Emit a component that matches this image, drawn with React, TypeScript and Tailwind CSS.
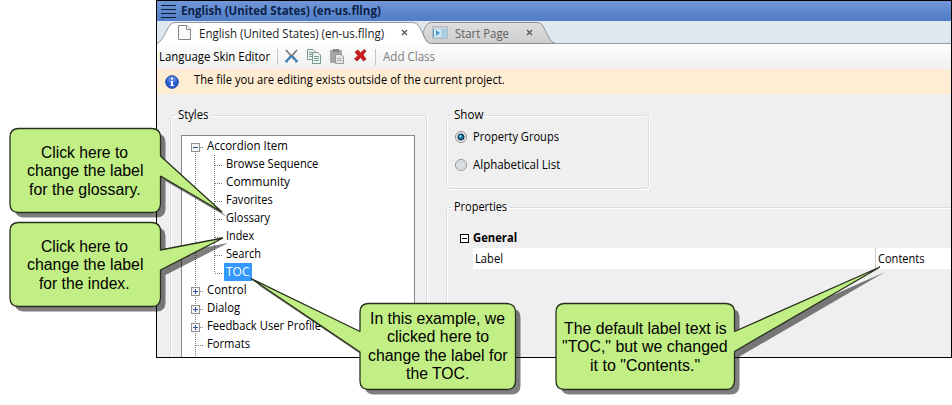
import { useLayoutEffect, useRef, useState, type ReactNode } from "react";

/* Single-line label condensed or stretched to a given width. */
function Fit({ w, className = "", children }: { w: number; className?: string; children: ReactNode }) {
  const ref = useRef<HTMLSpanElement>(null);
  const [scale, setScale] = useState(1);
  useLayoutEffect(() => {
    if (ref.current) setScale(w / ref.current.offsetWidth);
  }, [w]);
  return (
    <span className="inline-block shrink-0 whitespace-nowrap" style={{ width: w }}>
      <span ref={ref} className={`inline-block origin-left ${className}`} style={{ transform: `scaleX(${scale})` }}>
        {children}
      </span>
    </span>
  );
}

function TitleBar() {
  return (
    <div className="flex h-5 shrink-0 items-center bg-linear-to-b from-[#7197d8] to-[#4e7cc6] pl-1">
      <svg width="16" height="18" className="mr-1 shrink-0" shapeRendering="crispEdges">
        {[3, 7, 11, 15].map((y) => (
          <rect key={y} x="0" y={y} width="15" height="1" fill="#101c33" />
        ))}
      </svg>
      <Fit w={200} className="font-bold leading-5 text-[#0d2247]">English (United States) (en-us.fllng)</Fit>
    </div>
  );
}

function TabStrip() {
  return (
    <div className="relative h-[23px] shrink-0 bg-[#dfe7f1]">
      <svg width="794" height="23" className="absolute inset-0">
        <defs>
          <linearGradient id="tab" x1="0" y1="0" x2="0" y2="1">
            <stop offset="0" stopColor="#dedede" />
            <stop offset="1" stopColor="#cecece" />
          </linearGradient>
        </defs>
        <path d="M0 22.5H794" stroke="#9a9a9a" />
        <path d="M273 22.5C268 20 267 14 266 11.500C268 6 270 1.500 275 1.500H379C387 1.500 386 7 391 15Q395 22.500 399 22.500Z" fill="url(#tab)" stroke="#8f8f8f" />
        <path d="M0 23Q4 21 9 11Q13 1.500 18 1.500H254C261 1.500 262 5 265 11C268 18 269 22 274 23Z" fill="#fff" />
        <path d="M0 22.500Q4 21 9 11Q13 1.500 18 1.500H254C261 1.500 262 5 265 11C268 18 269 21 273 22.500" fill="none" stroke="#979797" />
      </svg>
      <div className="relative flex h-[23px] items-center">
        <svg width="14" height="16" className="ml-[21px] shrink-0">
          <path d="M.5.500H9L12.500 4V14.500H.5Z" fill="#fbfbfb" stroke="#858585" />
          <path d="M8.500.500V4.500H12.500" fill="#fff" stroke="#858585" />
        </svg>
        <span className="relative top-px"><Fit w={185} className="ml-[7px] text-[#1c1c1c]">English (United States) (en-us.fllng)</Fit></span>
        <svg width="7" height="7" className="ml-[24px] shrink-0"><path d="M1 1L6 6M6 1L1 6" stroke="#555" strokeWidth="1.200" /></svg>
        <svg width="16" height="13" className="ml-[24px] shrink-0">
          <rect x=".5" y=".5" width="15" height="12" fill="#a9cfe5" stroke="#b5bcc1" />
          <rect x="1" y="1" width="14" height="2" fill="#c8ced2" />
          <rect x="1" y="3" width="8" height="8" fill="#d5eaf5" />
          <path d="M1.500 3V11" stroke="#4f9cc5" />
          <path d="M4 4L8 7L4 10Z" fill="#499bc9" />
        </svg>
        <span className="relative top-px"><Fit w={54} className="ml-[7px] text-[#606060]">Start Page</Fit></span>
        <svg width="7" height="7" className="ml-[24px] shrink-0"><path d="M1 1L6 6M6 1L1 6" stroke="#555" strokeWidth="1.200" /></svg>
      </div>
    </div>
  );
}

function Toolbar() {
  return (
    <div className="flex h-[25px] shrink-0 items-center bg-linear-to-b from-[#fdfdfd] to-[#f0f0f0] pl-[2px]">
      <Fit w={111}>Language Skin Editor</Fit>
      <div className="ml-[7px] h-4 w-px bg-[#c5c5c5]" />
      <svg width="15" height="15" className="ml-[6px] shrink-0" fill="none">
        <path d="M2 1L11 11M13 1L4 11" stroke="#777" strokeWidth="1.700" />
        <path d="M8 7L12.500 12M7 7L2.500 12" stroke="#367cb5" strokeWidth="2" />
        <path d="M1 11.500L3.500 13.500M14 11.500L11.500 13.500" stroke="#3a7dba" strokeWidth="1.500" />
      </svg>
      <svg width="15" height="15" className="ml-[8px] shrink-0" stroke="#7c9691" fill="#edf4f2">
        <path d="M.5.500H6L8.500 3V10.500H.5Z" />
        <path d="M2 3.500H5M2 5.500H5M2 7.500H5" />
        <path d="M5.500 3.500H11L13.500 6V14.500H5.500Z" />
        <path d="M7 7.500H12M7 9.500H12M7 11.500H12" stroke="#72a096" />
      </svg>
      <svg width="15" height="15" className="ml-[8px] shrink-0">
        <rect x="0" y="1" width="12" height="13" rx="1" fill="#a6a6a6" />
        <rect x="3" y="0" width="6" height="3" fill="#858585" />
        <path d="M5.500 5.500H11L13.500 8V14.500H5.500Z" fill="#e7e7e7" stroke="#999" />
        <path d="M7 9.500H11M7 11.500H12" stroke="#aaa" />
      </svg>
      <svg width="13" height="13" className="mb-[2px] ml-[9px] shrink-0">
        <path d="M1 3L4 1L6.500 4L10 .5L12 2L9 6L12 10L9.500 12L6.500 8.500L3 12L.5 10L4 6.500Z" fill="#cf1e1e" stroke="#9d1515" strokeWidth=".8" />
      </svg>
      <div className="ml-[8px] h-4 w-px bg-[#c5c5c5]" />
      <Fit w={52} className="ml-[7px] text-[#7c7c7c]">Add Class</Fit>
    </div>
  );
}

function InfoBar() {
  return (
    <div className="flex h-[25px] shrink-0 items-center bg-[#ffedd3] pl-2">
      <svg width="14" height="14" className="mr-[15px] shrink-0">
        <circle cx="7" cy="7" r="6.300" fill="#2c5fd0" stroke="#1d46a6" />
        <ellipse cx="7" cy="4.500" rx="4.500" ry="3" fill="#6f98ec" opacity=".6" />
        <path d="M6 2.500H8V4.500H6ZM5.500 6H8V10H9V11H5.500V10H6V7H5.500Z" fill="#fff" />
      </svg>
      <Fit w={311} className="relative -top-[2px]">The file you are editing exists outside of the current project.</Fit>
    </div>
  );
}

type Row = { text: string; w: number; kind: "minus" | "plus" | "leaf" | "child"; selected?: boolean };
const rows: Row[] = [
  { text: "Accordion Item", w: 81, kind: "minus" },
  { text: "Browse Sequence", w: 92, kind: "child" },
  { text: "Community", w: 64, kind: "child" },
  { text: "Favorites", w: 47, kind: "child" },
  { text: "Glossary", w: 44, kind: "child" },
  { text: "Index", w: 28, kind: "child" },
  { text: "Search", w: 35, kind: "child" },
  { text: "TOC", w: 24, kind: "child", selected: true },
  { text: "Control", w: 40, kind: "plus" },
  { text: "Dialog", w: 33, kind: "plus" },
  { text: "Feedback User Profile I", w: 120, kind: "plus" },
  { text: "Formats", w: 43, kind: "leaf" },
];

function TreeRow({ row, index }: { row: Row; index: number }) {
  const child = row.kind === "child";
  const last = !!row.selected;
  const boxed = row.kind === "minus" || row.kind === "plus";
  return (
    <div className="flex h-[18px] shrink-0 items-center">
      <svg width={child ? 41 : 24} height="18" className="shrink-0" shapeRendering="crispEdges">
        <g stroke="#777" strokeDasharray="1 1" fill="none">
          <path d={index === 0 ? "M13.500 10V18" : "M13.500 0V18"} />
          {child ? (
            <>
              <path d={last ? "M32.500 0V10" : "M32.500 0V18"} />
              <path d="M33 10.500H41" />
            </>
          ) : (
            <path d="M14 10.500H22" />
          )}
        </g>
        {boxed && (
          <>
            <rect x="9.500" y="6.500" width="8" height="8" fill="#f5f5f5" stroke="#919191" />
            <path d={row.kind === "plus" ? "M11 10.500H16M13.500 8V13" : "M11 10.500H16"} stroke="#34519b" />
          </>
        )}
      </svg>
      {row.selected ? (
        <span className="ml-px flex h-[18px] w-7 items-center bg-[#3399ff] pl-[2px] text-white">
          <Fit w={row.w}>{row.text}</Fit>
        </span>
      ) : (
        <Fit w={row.w} className={child ? "ml-[3px]" : "ml-px"}>{row.text}</Fit>
      )}
    </div>
  );
}

function StylesPanel() {
  return (
    <fieldset className="ml-[13px] mt-[12px] h-[252px] w-[257px] shrink-0 rounded-t-[3px] border border-b-0 border-[#d3dee7] shadow-[inset_1px_1px_0_#fff,1px_0_0_#fff]">
      <legend className="ml-1 h-[18px] px-[3px] leading-[18px]"><Fit w={30}>Styles</Fit></legend>
      <div className="ml-[10px] mt-[11px] flex h-[232px] w-[234px] flex-col border border-[#828790] bg-white pt-px">
        {rows.map((row, i) => <TreeRow key={row.text} row={row} index={i} />)}
        <svg width="24" height="6" className="shrink-0" shapeRendering="crispEdges">
          <path d="M13.500 0V6" stroke="#777" strokeDasharray="1 1" />
        </svg>
      </div>
    </fieldset>
  );
}

function Radio({ label, w, on }: { label: string; w: number; on?: boolean }) {
  return (
    <div className="flex h-7 items-center">
      <svg width="12" height="12" className="mr-[6px] shrink-0">
        <circle cx="6" cy="6" r="5.500" fill="#f3f3f3" stroke="#8d8f8f" />
        <circle cx="6" cy="6" r="3.800" fill={on ? "#bcd3df" : "#dcdfe2"} stroke="#c4c8cb" strokeWidth=".7" />
        {on && <circle cx="6" cy="6" r="3" fill="#1b6c98" stroke="#0d3650" />}
        {on && <circle cx="5.300" cy="5.300" r="1.300" fill="#72d0f2" />}
      </svg>
      <Fit w={w}>{label}</Fit>
    </div>
  );
}

function PropertiesColumn() {
  return (
    <div className="ml-[19px] mt-[12px] flex w-[505px] shrink-0 flex-col">
      <fieldset className="h-[83px] w-[203px] rounded-[3px] border border-[#d3dee7] pl-2 shadow-[inset_1px_1px_0_#fff,1px_1px_0_#fff]">
        <legend className="-ml-[4px] h-[18px] px-[3px] leading-[18px]"><Fit w={29}>Show</Fit></legend>
        <div className="-mt-px"><Radio label="Property Groups" w={86} on /></div>
        <Radio label="Alphabetical List" w={87} />
      </fieldset>
      <fieldset className="mt-[9px] h-[162px] w-[520px] rounded-tl-[3px] border border-b-0 border-[#d3dee7] shadow-[inset_1px_1px_0_#fff]">
        <legend className="ml-[4px] h-[18px] px-[3px] leading-[18px]"><Fit w={53}>Properties</Fit></legend>
        <div className="ml-[13px] mt-[12px] flex h-[20px] items-center">
          <svg width="9" height="9" className="mr-1 shrink-0" shapeRendering="crispEdges">
            <rect x=".5" y=".5" width="8" height="8" fill="#fff" stroke="#000" />
            <path d="M2 4.500H7" stroke="#000" />
          </svg>
          <Fit w={44} className="font-bold">General</Fit>
        </div>
        <div className="ml-[26px] flex h-[21px] bg-white">
          <div className="flex w-[403px] items-center border-r border-[#cdcdcd] pl-[2px]"><Fit w={28}>Label</Fit></div>
          <div className="flex items-center pl-[2px]"><Fit w={47}>Contents</Fit></div>
        </div>
      </fieldset>
    </div>
  );
}

const bubbles = [
  "M18 128.500H152Q160.500 129 160.500 137V156L222 212L160.500 176V204Q160 212.500 152 212.500H18Q10 212 10 204V137Q10 129 18 128.500Z",
  "M18 222.500H152Q160.500 223 160.500 231V250L223 238L160.500 270V298Q160 306.500 152 306.500H18Q10 306 10 298V231Q10 223 18 222.500Z",
  "M368 303.500H507Q515.500 304 515.500 312V381Q515 389.500 507 389.500H368Q360 389 360 381V352L251 278.500L360 331.500V312Q360 304 368 303.500Z",
  "M564 303.500H726Q734.500 304 734.500 312V331.500L880 267L734.500 351.500V381Q734 389.500 726 389.500H564Q556 389 556 381V312Q556 304 564 303.500Z",
];

type Note = { box: string; lines: [string, number][] };
const notes: Note[] = [
  { box: "left-[10px] top-[144px] w-[149px]", lines: [["Click here to", 87], ["change the label", 116], ["for the glossary.", 112]] },
  { box: "left-[10px] top-[238px] w-[149px]", lines: [["Click here to", 87], ["change the label", 116], ["for the index.", 91]] },
  { box: "left-[360px] top-[310px] w-[155px]", lines: [["In this example, we", 135], ["clicked here to", 102], ["change the label for", 140], ["the TOC.", 63]] },
  { box: "left-[556px] top-[320px] w-[178px]", lines: [["The default label text is", 163], ['"TOC," but we changed', 166], ['it to "Contents."', 110]] },
];

function Callouts() {
  return (
    <div className="pointer-events-none absolute inset-0">
      <svg width="952" height="405" className="absolute inset-0">
        {bubbles.map((d) => (
          <g key={d}>
            <path d={d} transform="translate(5 5)" fill="#000" fillOpacity=".5" />
            <path d={d} fill="#c2ef85" stroke="#27301c" strokeWidth="1.300" strokeLinejoin="bevel" />
          </g>
        ))}
      </svg>
      {notes.map((note) => (
        <div
          key={note.box}
          className={`absolute flex flex-col items-center font-['Liberation_Sans',Arial,sans-serif] text-[16px] leading-[18.4px] text-black ${note.box}`}
        >
          {note.lines.map(([text, w]) => <Fit key={text} w={w}>{text}</Fit>)}
        </div>
      ))}
    </div>
  );
}

export default function App() {
  return (
    <div className="relative h-[405px] w-[952px] overflow-hidden bg-white font-['Open_Sans','Noto_Sans',sans-serif] text-[12px] leading-[18px] text-black">
      <div className="ml-[156px] flex h-[358px] w-[796px] flex-col overflow-hidden border border-black bg-[#efefef]">
        <TitleBar />
        <TabStrip />
        <Toolbar />
        <InfoBar />
        <div className="flex min-h-0 flex-1 items-start overflow-hidden">
          <StylesPanel />
          <PropertiesColumn />
        </div>
      </div>
      <Callouts />
    </div>
  );
}
